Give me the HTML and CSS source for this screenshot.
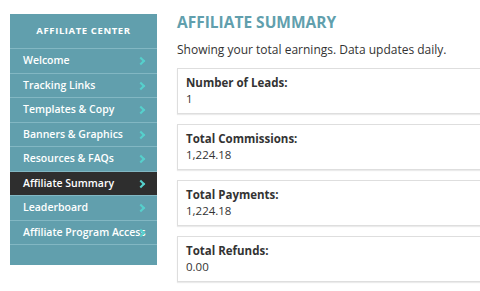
FILE: index.html
```html
<!DOCTYPE html>
<html lang="en">
<head>
    <meta charset="UTF-8">
    <meta name="viewport" content="width=device-width, initial-scale=1.0">
    <title>Affiliate Summary</title>
    <link rel="stylesheet" href="styles.css">
</head>
<body>
    <div class="page">
        <nav class="sidebar">
            <div class="sidebar-title">AFFILIATE CENTER</div>
            <a class="nav-item" href="#">Welcome<span class="chev"></span></a>
            <a class="nav-item" href="#">Tracking Links<span class="chev"></span></a>
            <a class="nav-item" href="#">Templates &amp; Copy<span class="chev"></span></a>
            <a class="nav-item" href="#">Banners &amp; Graphics<span class="chev"></span></a>
            <a class="nav-item" href="#">Resources &amp; FAQs<span class="chev"></span></a>
            <a class="nav-item active" href="#">Affiliate Summary<span class="chev"></span></a>
            <a class="nav-item" href="#">Leaderboard<span class="chev"></span></a>
            <a class="nav-item" href="#">Affiliate Program Access<span class="chev"></span></a>
        </nav>

        <main class="content">
            <h1>AFFILIATE SUMMARY</h1>
            <p class="intro">Showing your total earnings. Data updates daily.</p>

            <div class="stat">
                <div class="stat-label">Number of Leads:</div>
                <div class="stat-value">1</div>
            </div>
            <div class="stat">
                <div class="stat-label">Total Commissions:</div>
                <div class="stat-value">1,224.18</div>
            </div>
            <div class="stat">
                <div class="stat-label">Total Payments:</div>
                <div class="stat-value">1,224.18</div>
            </div>
            <div class="stat">
                <div class="stat-label">Total Refunds:</div>
                <div class="stat-value">0.00</div>
            </div>
        </main>
    </div>
</body>
</html>
```

FILE: styles.css
```css
body {
    font-family: "Open Sans", Arial, sans-serif;
    margin: 0;
    padding: 0;
    background-color: #fff;
    color: #333;
    overflow: hidden;
}

.page {
    display: flex;
    align-items: flex-start;
    padding: 14px 0 0 10px;
}

.sidebar {
    width: 147px;
    flex-shrink: 0;
    background-color: #619fad;
    padding-bottom: 20px;
}

.sidebar-title {
    height: 34px;
    line-height: 34px;
    text-align: center;
    color: #fff;
    font-size: 9.5px;
    font-weight: 700;
    letter-spacing: 0.6px;
    border-bottom: 1px solid #82b7c3;
}

.nav-item {
    position: relative;
    display: block;
    height: 23.5px;
    line-height: 23.5px;
    padding-left: 13px;
    color: #fff;
    font-size: 10.5px;
    font-weight: 600;
    text-decoration: none;
    white-space: nowrap;
    border-bottom: 1px solid #82b7c3;
}

.nav-item.active {
    background-color: #2e2e2e;
}

.chev {
    position: absolute;
    right: 13px;
    top: 9px;
    width: 4px;
    height: 4px;
    border-top: 2px solid #56d0cc;
    border-right: 2px solid #56d0cc;
    transform: rotate(45deg);
}

.content {
    width: 320px;
    flex-shrink: 0;
    margin-left: 20px;
}

h1 {
    margin: 0;
    color: #619fad;
    font-size: 15.5px;
    font-weight: 700;
    line-height: 16px;
}

.intro {
    margin: 12px 0 10px;
    font-size: 12px;
    line-height: 16px;
}

.stat {
    height: 46px;
    box-sizing: border-box;
    margin-bottom: 10px;
    padding: 6px 8px 0;
    border: 1px solid #dedede;
    box-shadow: 0 1px 1px rgba(0, 0, 0, 0.08);
}

.stat-label {
    font-size: 11.5px;
    font-weight: 700;
    line-height: 16px;
}

.stat-value {
    font-size: 11.5px;
    line-height: 16px;
}
```
